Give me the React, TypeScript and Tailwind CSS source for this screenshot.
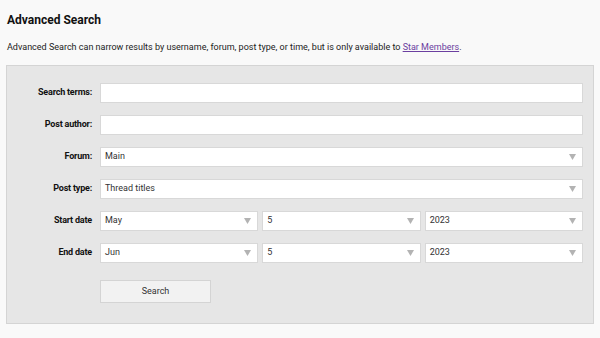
import React from 'react';

const font = { fontFamily: 'Roboto, "Liberation Sans", sans-serif' };

function Arrow() {
  return (
    <svg width="7" height="6" viewBox="0 0 7 6" className="shrink-0">
      <path d="M0 0 L7 0 L3.5 6 Z" fill="#b3b3b3" />
    </svg>
  );
}

function Select({ value, className = '' }: { value: string; className?: string }) {
  return (
    <div
      className={`flex h-[20px] items-center justify-between border border-[#d8d8d8] bg-white pl-[4px] pr-[6px] text-[9px] text-[#333] ${className}`}
    >
      <span>{value}</span>
      <Arrow />
    </div>
  );
}

function Row({ label, children }: { label: string; children: React.ReactNode }) {
  return (
    <div className="flex h-[20px] items-center">
      <div className="w-[93px] pr-[8px] text-right text-[9px] font-bold tracking-[-0.2px] text-[#111]">{label}</div>
      <div className="flex flex-1 gap-[4px]">{children}</div>
    </div>
  );
}

export default function App() {
  return (
    <div className="h-[338px] w-[600px] bg-[#f9f9f9] px-[6px] pt-[13px]" style={font}>
      <h1 className="pl-[1px] text-[12px] font-bold leading-[14px] text-[#111]">Advanced Search</h1>
      <p className="mt-[15px] pl-[1px] text-[9px] leading-[11px] text-[#222]">
        Advanced Search can narrow results by username, forum, post type, or time, but is only available to{' '}
        <span className="text-[#6b3fa0] underline">Star Members</span>.
      </p>
      <div className="mt-[12px] h-[259px] w-[588px] border border-[#d4d4d4] bg-[#e6e6e6] pr-[10px] pt-[17px]">
        <div className="flex flex-col gap-[12px]">
          <Row label="Search terms:">
            <div className="h-[20px] flex-1 border border-[#d8d8d8] bg-white" />
          </Row>
          <Row label="Post author:">
            <div className="h-[20px] flex-1 border border-[#d8d8d8] bg-white" />
          </Row>
          <Row label="Forum:">
            <Select value="Main" className="flex-1" />
          </Row>
          <Row label="Post type:">
            <Select value="Thread titles" className="flex-1" />
          </Row>
          <Row label="Start date">
            <Select value="May" className="flex-1" />
            <Select value="5" className="flex-1" />
            <Select value="2023" className="flex-1" />
          </Row>
          <Row label="End date">
            <Select value="Jun" className="flex-1" />
            <Select value="5" className="flex-1" />
            <Select value="2023" className="flex-1" />
          </Row>
        </div>
        <div className="ml-[93px] mt-[14px]">
          <button className="h-[23px] w-[111px] border border-[#d4d4d4] bg-[#f2f2f2] text-[9px] text-[#333]">
            Search
          </button>
        </div>
      </div>
    </div>
  );
}
